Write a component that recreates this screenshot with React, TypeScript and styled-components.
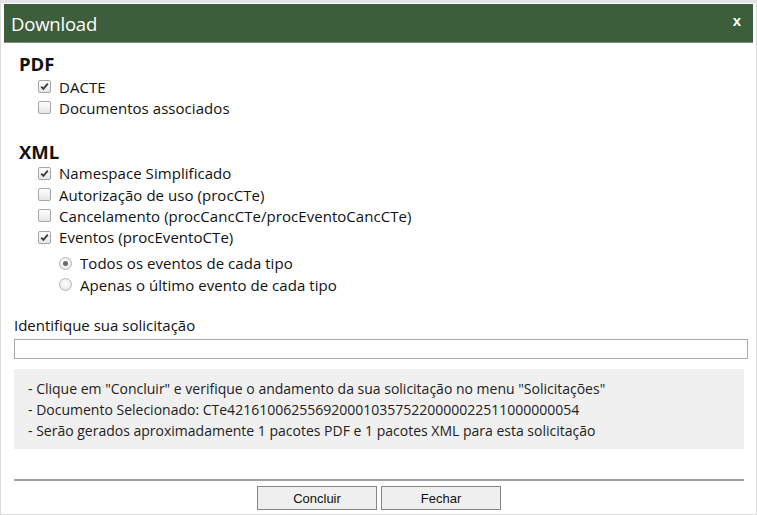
import React, { FC } from 'react';
import styled, { createGlobalStyle } from 'styled-components';

const GlobalStyle = createGlobalStyle`
  html, body {
    margin: 0;
    padding: 0;
    background: #fff;
  }
  body {
    font-family: 'Open Sans', 'Noto Sans', sans-serif;
    color: #111;
  }
`;

const Dialog = styled.div`
  box-sizing: border-box;
  width: 757px;
  height: 515px;
  border: 1px solid #dcdcdc;
  border-top: 3px solid #e4e4e4;
  padding: 1px 3px 0;
  display: flex;
  flex-direction: column;
  background: #fff;
`;

const Header = styled.div`
  height: 38px;
  background: #3c5e3b;
  border-bottom: 1px solid #8a8a8a;
  display: flex;
  align-items: center;
  justify-content: space-between;
  padding: 0 12px 0 7px;
`;

const Title = styled.span`
  color: #fff;
  font-size: 18.5px;
  letter-spacing: -0.2px;
`;

const Close = styled.span`
  color: #fff;
  font-family: 'Liberation Sans', Arial, sans-serif;
  font-weight: bold;
  font-size: 15px;
  margin-top: -6px;
  cursor: pointer;
`;

const Body = styled.div`
  padding: 0 9px 0 10px;
  display: flex;
  flex-direction: column;
`;

const SectionTitle = styled.div<{ $top: number }>`
  font-weight: bold;
  font-size: 18.5px;
  line-height: 22px;
  padding-left: 5px;
  margin-top: ${(p) => p.$top}px;
`;

const List = styled.div<{ $indent: number; $top?: number }>`
  display: flex;
  flex-direction: column;
  padding-left: ${(p) => p.$indent}px;
  margin-top: ${(p) => p.$top ?? 0}px;
`;

const Row = styled.label`
  display: flex;
  align-items: center;
  gap: 8px;
  height: 21.3px;
  font-size: 15px;
  letter-spacing: 0.05px;
`;

const BoxMark = styled.span`
  width: 11px;
  height: 11px;
  border: 1px solid #a6a6a6;
  border-radius: 2px;
  background: linear-gradient(#fdfdfd, #e6e6e6);
  display: flex;
  align-items: center;
  justify-content: center;
  flex-shrink: 0;
`;

const RadioMark = styled.span`
  width: 11px;
  height: 11px;
  border: 1px solid #b4b4b4;
  border-radius: 50%;
  background: radial-gradient(circle at 50% 40%, #ffffff, #e2e2e2);
  display: flex;
  align-items: center;
  justify-content: center;
  flex-shrink: 0;
`;

const Dot = styled.span`
  width: 5px;
  height: 5px;
  border-radius: 50%;
  background: #6a6a6a;
`;

const FieldLabel = styled.div`
  font-size: 15px;
  line-height: 21px;
  margin-top: 20px;
`;

const Input = styled.input`
  box-sizing: border-box;
  width: 734px;
  height: 20px;
  margin-top: 3px;
  border: 1px solid #a9a9a9;
  padding: 0 4px;
  font-family: inherit;
  outline: none;
`;

const Info = styled.div`
  width: 730px;
  box-sizing: border-box;
  margin-top: 10px;
  background: #f0f0f0;
  padding: 9px 14px 8px;
  font-size: 14px;
  line-height: 21px;
  color: #222;
`;

const Rule = styled.hr`
  width: 730px;
  margin: 30px 0 0;
  border: none;
  border-top: 2px solid #a0a0a0;
`;

const Buttons = styled.div`
  display: flex;
  justify-content: center;
  gap: 4px;
  margin-top: 5px;
`;

const Button = styled.button`
  width: 120px;
  height: 24px;
  background: #efefef;
  border: 1px solid #858585;
  font-family: 'Liberation Sans', Arial, sans-serif;
  font-size: 13px;
  color: #111;
  cursor: pointer;
`;

const Check: FC<{ checked?: boolean; label: string }> = ({ checked, label }) => (
  <Row>
    <BoxMark>
      {checked && (
        <svg width="9" height="9" viewBox="0 0 9 9">
          <path d="M1.2 4.6 L3.4 6.9 L7.8 1.6" stroke="#3a3a3a" strokeWidth="1.8" fill="none" />
        </svg>
      )}
    </BoxMark>
    {label}
  </Row>
);

const Radio: FC<{ checked?: boolean; label: string }> = ({ checked, label }) => (
  <Row>
    <RadioMark>{checked && <Dot />}</RadioMark>
    {label}
  </Row>
);

export default function App() {
  return (
    <>
      <GlobalStyle />
      <Dialog>
        <Header>
          <Title>Download</Title>
          <Close>x</Close>
        </Header>
        <Body>
          <SectionTitle $top={10}>PDF</SectionTitle>
          <List $indent={24} $top={1}>
            <Check checked label="DACTE" />
            <Check label="Documentos associados" />
          </List>
          <SectionTitle $top={22}>XML</SectionTitle>
          <List $indent={24}>
            <Check checked label="Namespace Simplificado" />
            <Check label="Autorização de uso (procCTe)" />
            <Check label="Cancelamento (procCancCTe/procEventoCancCTe)" />
            <Check checked label="Eventos (procEventoCTe)" />
            <List $indent={21} $top={5}>
              <Radio checked label="Todos os eventos de cada tipo" />
              <Radio label="Apenas o último evento de cada tipo" />
            </List>
          </List>
          <FieldLabel>Identifique sua solicitação</FieldLabel>
          <Input type="text" />
          <Info>
            <div>- Clique em "Concluir" e verifique o andamento da sua solicitação no menu "Solicitações"</div>
            <div>- Documento Selecionado: CTe42161006255692000103575220000022511000000054</div>
            <div>- Serão gerados aproximadamente 1 pacotes PDF e 1 pacotes XML para esta solicitação</div>
          </Info>
          <Rule />
          <Buttons>
            <Button>Concluir</Button>
            <Button>Fechar</Button>
          </Buttons>
        </Body>
      </Dialog>
    </>
  );
}
